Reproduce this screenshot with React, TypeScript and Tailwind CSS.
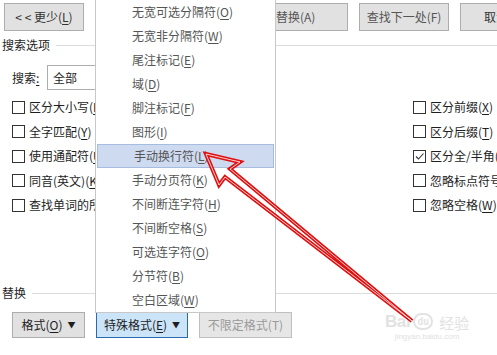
import React from "react";

const font = { fontFamily: '"Noto Sans CJK SC", "Microsoft YaHei", sans-serif' };

const menuItems: [string, string][] = [
  ["无宽可选分隔符", "O"],
  ["无宽非分隔符", "W"],
  ["尾注标记", "E"],
  ["域", "D"],
  ["脚注标记", "F"],
  ["图形", "I"],
  ["手动换行符", "L"],
  ["手动分页符", "K"],
  ["不间断连字符", "H"],
  ["不间断空格", "S"],
  ["可选连字符", "O"],
  ["分节符", "B"],
  ["空白区域", "W"],
];

const leftOpts: [string, string][] = [
  ["区分大小写", "H"],
  ["全字匹配", "Y"],
  ["使用通配符", "U"],
  ["同音(英文)", "K"],
  ["查找单词的所有形式(英文)", "W"],
];

const rightOpts: [string, string, boolean][] = [
  ["区分前缀", "X", false],
  ["区分后缀", "T", false],
  ["区分全/半角", "M", true],
  ["忽略标点符号", "S", false],
  ["忽略空格", "W", false],
];

const Key = ({ text, k }: { text: string; k: string }) => (
  <>
    {text}(<span className="underline underline-offset-2">{k}</span>)
  </>
);

const Check = ({ checked }: { checked?: boolean }) => (
  <span className="w-[13px] h-[13px] border border-[#333] bg-white flex items-center justify-center shrink-0">
    {checked && (
      <svg width="11" height="11" viewBox="0 0 11 11">
        <path d="M2 5.5 L4.5 8 L9.5 2.5" fill="none" stroke="#333" strokeWidth="1.1" />
      </svg>
    )}
  </span>
);

const Btn = ({ children, className = "" }: { children: React.ReactNode; className?: string }) => (
  <div
    className={`h-[28px] flex items-center border border-[#adadad] bg-[#e1e1e1] text-[12px] text-[#333] shrink-0 whitespace-nowrap overflow-hidden ${className}`}
  >
    {children}
  </div>
);

export default function App() {
  return (
    <div
      className="w-[497px] h-[355px] relative overflow-hidden bg-white text-[12px] text-[#1e1e1e] leading-none"
      style={font}
    >
      {/* top buttons */}
      <div className="flex pt-[3px] pl-[4px] h-[31px]">
        <Btn className="w-[80px] justify-center">
          &lt; &lt; 更少(<span className="underline underline-offset-2">L</span>)
        </Btn>
        <Btn className="w-[128px] ml-[136px] pl-[31px] text-[#555]">全部替换(A)</Btn>
        <Btn className="w-[90px] ml-[11px] justify-center text-[#555]">查找下一处(F)</Btn>
        <Btn className="w-[90px] ml-[11px] pl-[23px]">取消</Btn>
      </div>

      {/* search options header */}
      <div className="flex items-center h-[16px] mt-[6px]">
        <span className="pl-[2px]">搜索选项</span>
        <div className="flex-1 h-px bg-[#dcdcdc] ml-[6px]" />
      </div>

      {/* search scope */}
      <div className="flex items-center h-[25px] mt-[12px] pl-[12px]">
        <span className="w-[35px]">
          搜索<span className="underline underline-offset-2">:</span>
        </span>
        <div className="w-[220px] h-[25px] border border-[#adadad] flex items-center pl-[5px]">全部</div>
      </div>

      {/* options */}
      <div className="flex mt-[5px]">
        <div className="w-[413px] shrink-0 pl-[12px] flex flex-col">
          {leftOpts.map(([t, k]) => (
            <div key={t} className="h-[24.5px] flex items-center gap-[4px] whitespace-nowrap">
              <Check />
              <span>
                <Key text={t} k={k} />
              </span>
            </div>
          ))}
        </div>
        <div className="flex flex-col shrink-0">
          {rightOpts.map(([t, k, c]) => (
            <div key={t} className="h-[24.5px] flex items-center gap-[4px] whitespace-nowrap">
              <Check checked={c} />
              <span>
                <Key text={t} k={k} />
              </span>
            </div>
          ))}
        </div>
      </div>

      {/* replace header */}
      <div className="flex items-center h-[16px] mt-[67.5px]">
        <span className="pl-[2px]">替换</span>
        <div className="flex-1 h-px bg-[#dcdcdc] ml-[6px]" />
      </div>

      {/* bottom buttons */}
      <div className="flex mt-[11px] pl-[12px] gap-[11px]">
        <div className="w-[73px] h-[26px] flex items-center justify-center gap-[5px] border border-[#adadad] bg-[#e1e1e1]">
          <span>
            <Key text="格式" k="O" />
          </span>
          <span className="text-[8px]">▼</span>
        </div>
        <div className="w-[92px] h-[26px] flex items-center justify-center gap-[5px] border border-[#2a6bb0] bg-[#cce4f7]">
          <span>
            <Key text="特殊格式" k="E" />
          </span>
          <span className="text-[8px]">▼</span>
        </div>
        <div className="w-[93px] h-[26px] flex items-center justify-center border border-[#bfbfbf] bg-[#e6e6e6] text-[#9a9a9a]">
          不限定格式(T)
        </div>
      </div>

      {/* dropdown menu */}
      <div className="absolute left-[95px] top-0 w-[181px] h-[313px] bg-white border-x border-b border-[#c8c8c8] flex flex-col">
        {menuItems.map(([t, k], i) => (
          <div
            key={t + i}
            className={`h-[24px] flex items-center pl-[36px] text-[#555] shrink-0 ${
              i === 6 ? "mx-[1px] pl-[35px] bg-[#cddaef] border border-[#a7bde0] text-[#333]" : ""
            }`}
          >
            <Key text={t} k={k} />
          </div>
        ))}
      </div>

      {/* watermark */}
      <div className="absolute left-[385px] top-[313px] flex flex-col items-center text-[#e2e2e2] pointer-events-none">
        <div className="flex items-end gap-[3px]">
          <span className="text-[17px] font-bold tracking-tight" style={{ fontFamily: '"Liberation Sans", sans-serif' }}>
            Bai
          </span>
          <span className="w-[20px] h-[17px] rounded-full border-2 border-[#e2e2e2] text-[9px] flex items-center justify-center font-bold">
            du
          </span>
          <span className="text-[15px] ml-[3px]">经验</span>
        </div>
        <span className="text-[8px] mt-[3px]" style={{ fontFamily: '"Liberation Sans", sans-serif' }}>
          jingyan.baidu.com
        </span>
      </div>

      {/* red arrow */}
      <svg className="absolute inset-0 pointer-events-none" width="497" height="355" viewBox="0 0 497 355">
        <polygon
          points="206,154 240,162 230,169 412,321 225,177 219,185"
          fill="none"
          stroke="#e01010"
          strokeWidth="4"
          strokeLinejoin="miter"
        />
        <polygon
          points="206,154 240,162 230,169 412,321 225,177 219,185"
          fill="none"
          stroke="#ffffff"
          strokeWidth="1"
          strokeOpacity="0.8"
        />
      </svg>
    </div>
  );
}
